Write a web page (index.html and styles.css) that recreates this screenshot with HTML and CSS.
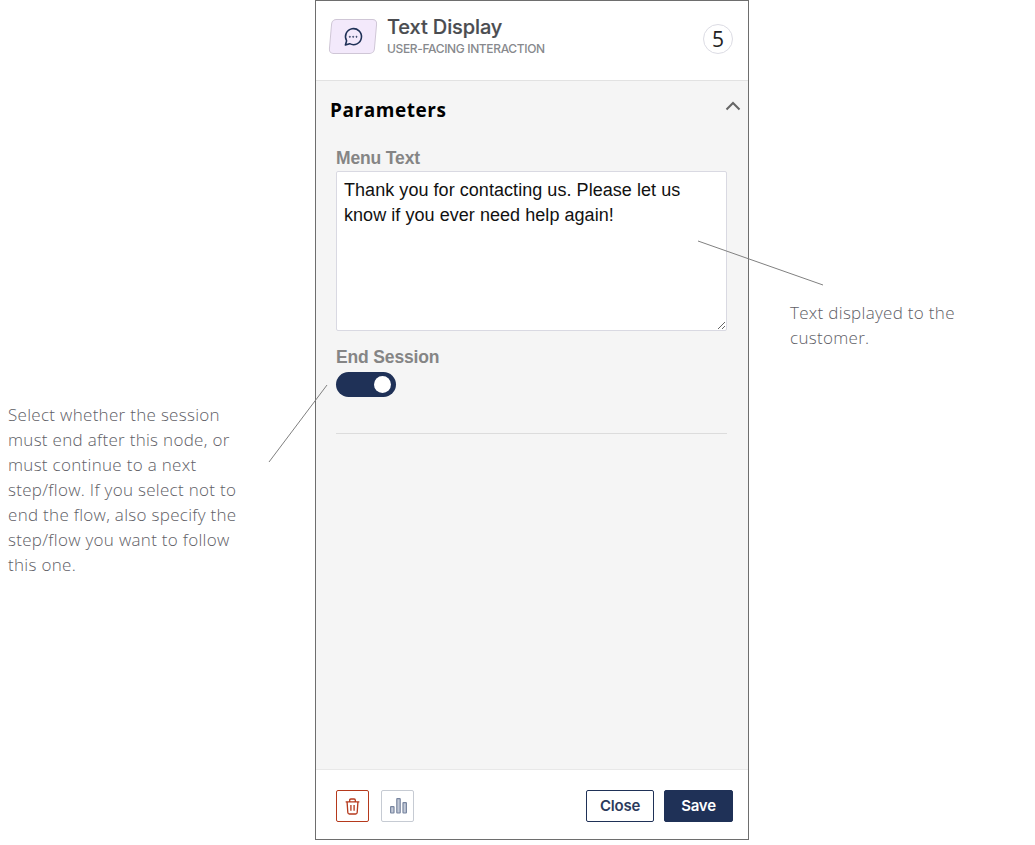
FILE: index.html
```html
<!DOCTYPE html>
<html lang="en">
<head>
<meta charset="utf-8">
<title>Text Display</title>
<link rel="stylesheet" href="styles.css">
</head>
<body>
<div class="canvas">
  <section class="panel">
    <header class="head">
      <div class="node-icon">
        <svg class="chat" width="20" height="20" viewBox="0 0 18 18" fill="none" stroke="#1f3157" stroke-width="1.4">
          <path d="M2.2 16.2 L3.3 12.4 A7.2 7.2 0 1 1 6 15 Z" stroke-linejoin="round"/>
          <circle cx="6.2" cy="8.8" r=".55" fill="#1f3157" stroke-width=".5"/>
          <circle cx="9.2" cy="8.8" r=".55" fill="#1f3157" stroke-width=".5"/>
          <circle cx="12.2" cy="8.8" r=".55" fill="#1f3157" stroke-width=".5"/>
        </svg>
      </div>
      <div class="titles">
        <div class="title">Text Display</div>
        <div class="subtitle">USER-FACING INTERACTION</div>
      </div>
      <div class="step">5</div>
    </header>
    <main class="body">
      <div class="section-head">
        <h2 class="section-title">Parameters</h2>
        <svg class="chevron" width="16" height="10" viewBox="0 0 16 10" fill="none" stroke="#666" stroke-width="2"><path d="M1.5 8.5 L8 2 L14.5 8.5"/></svg>
      </div>
      <div class="fields">
        <label class="label label-menu" for="menu">Menu Text</label>
        <textarea id="menu" class="textarea">Thank you for contacting us. Please let us know if you ever need help again!</textarea>
        <div class="label label-end">End Session</div>
        <div class="toggle"><span class="knob"></span></div>
        <hr class="rule">
      </div>
    </main>
    <footer class="foot">
      <button class="icon-btn danger" type="button" aria-label="Delete">
        <svg width="15" height="17" viewBox="0 0 16 18" fill="none" stroke="#b5391c" stroke-width="1.4">
          <path d="M.7 4 H15.3 M5 3.8 V2.2 Q5 1 6.2 1 H9.8 Q11 1 11 2.2 V3.8 M2.2 4 L3 15.4 Q3.1 17 4.7 17 H11.3 Q12.9 17 13 15.4 L13.8 4 M6.3 7.5 V13.5 M9.7 7.5 V13.5"/>
        </svg>
      </button>
      <button class="icon-btn muted" type="button" aria-label="Statistics">
        <svg class="bars" width="17" height="16" viewBox="0 0 17 16" fill="#c3cad8" stroke="#78859f" stroke-width="1.2">
          <rect x=".6" y="8.6" width="3.4" height="6.4" rx=".5"/>
          <rect x="6.8" y=".6" width="3.4" height="14.4" rx=".5"/>
          <rect x="13" y="4.6" width="3.4" height="10.4" rx=".5"/>
        </svg>
      </button>
      <div class="spacer"></div>
      <button class="btn outline" type="button">Close</button>
      <button class="btn solid" type="button">Save</button>
    </footer>
  </section>

  <p class="note note-right">Text displayed to the customer.</p>
  <p class="note note-left">Select whether the session must end after this node, or must continue to a next step/flow. If you select not to end the flow, also specify the step/flow you want to follow this one.</p>

  <svg class="leaders" width="1035" height="845" viewBox="0 0 1035 845" fill="none" stroke="#808080" stroke-width="1">
    <path d="M698 241 L823 285"/>
    <path d="M327 385 L269 462"/>
  </svg>
</div>
</body>
</html>
```
FILE: styles.css
```css
* { box-sizing: border-box; }
html, body { margin: 0; padding: 0; background: #fff; }
.canvas { position: relative; width: 1035px; height: 845px; overflow: hidden; }

.panel {
  margin-left: 315px;
  width: 434px;
  height: 840px;
  border: 1px solid #6e6e6e;
  display: flex;
  flex-direction: column;
  background: #fff;
}

.head {
  height: 80px;
  flex: none;
  display: flex;
  align-items: flex-start;
  border-bottom: 1px solid #e2e2e2;
  padding: 17px 15px 0 14px;
}
.node-icon {
  width: 46px;
  height: 35px;
  margin-top: 1px;
  background: #f3e9fb;
  border: 1px solid #cfc6d6;
  border-radius: 5px;
  transform: skewX(-5deg);
  display: flex;
  align-items: center;
  justify-content: center;
}
.chat { transform: skewX(5deg); }
.titles { margin-left: 11px; flex: 1; }
.title {
  font: 500 20px/18px Inter, sans-serif;
  letter-spacing: -.12px;
  color: #4a4c50;
  -webkit-text-stroke: .2px #4a4c50;
}
.subtitle {
  margin-top: 6px;
  font: 500 12px/14px Inter, sans-serif;
  letter-spacing: -.36px;
  color: #87898d;
}
.step {
  width: 30px;
  height: 30px;
  margin-top: 6px;
  border: 1px solid #dcdce4;
  border-radius: 50%;
  display: flex;
  align-items: center;
  justify-content: center;
  font: 400 21px "Open Sans", sans-serif;
  color: #222;
}

.body { flex: 1; background: #f5f5f5; padding: 0 7px 0 14px; }
.section-head { display: flex; justify-content: space-between; align-items: flex-start; padding-top: 17px; }
.section-title {
  margin: 0;
  font: 700 19px/24px "Open Sans", sans-serif;
  letter-spacing: .55px;
  color: #000;
}
.chevron { margin-top: 3px; }

.fields { padding: 0 6px; margin-top: 26px; }
.label {
  display: block;
  font: 700 17.5px/20px "Liberation Sans", sans-serif;
  letter-spacing: -.15px;
  color: #858585;
}
.textarea {
  display: block;
  width: 391px;
  height: 160px;
  margin-top: 3px;
  padding: 6px 7px 3px;
  border: 1px solid #d9d9e2;
  border-radius: 2px;
  background: #fff;
  outline: none;
  font: 400 18px/25px "Liberation Sans", sans-serif;
  letter-spacing: .05px;
  color: #111;
}
.label-end { margin-top: 16px; }
.toggle {
  width: 60px;
  height: 25px;
  margin-top: 5px;
  border-radius: 13px;
  background: #1f3157;
  display: flex;
  align-items: center;
  justify-content: flex-end;
  padding-right: 5px;
}
.knob { width: 17px; height: 17px; border-radius: 50%; background: #fff; }
.rule { margin: 36px 0 0; border: 0; border-top: 1px solid #dcdcdc; width: 391px; }

.foot {
  height: 70px;
  flex: none;
  display: flex;
  align-items: flex-start;
  border-top: 1px solid #e8e8e8;
  padding: 20px 15px 0 20px;
}
.spacer { flex: 1; }
.icon-btn {
  width: 33px;
  height: 32px;
  padding: 0;
  background: #fff;
  border-radius: 2px;
  display: flex;
  align-items: center;
  justify-content: center;
}
.bars { margin-left: 2px; }
.danger { border: 1px solid #b5391c; }
.muted { border: 1px solid #c6cbd3; margin-left: 12px; }
.btn {
  height: 32px;
  border-radius: 2px;
  font: 600 15px/28px Inter, sans-serif;
  letter-spacing: -.2px;
  padding: 0;
}
.outline { width: 68px; background: #fff; border: 1px solid #1f3157; color: #2b3a5c; }
.solid { width: 69px; margin-left: 10px; background: #1f3157; border: 1px solid #1f3157; color: #fff; }

.note {
  position: absolute;
  margin: 0;
  font: 300 17px/25px "Open Sans", sans-serif;
  letter-spacing: .3px;
  color: #606066;
}
.note-right { left: 790px; top: 300px; width: 190px; }
.note-left { left: 8px; top: 402px; width: 238px; }
.leaders { position: absolute; left: 0; top: 0; pointer-events: none; }
```
